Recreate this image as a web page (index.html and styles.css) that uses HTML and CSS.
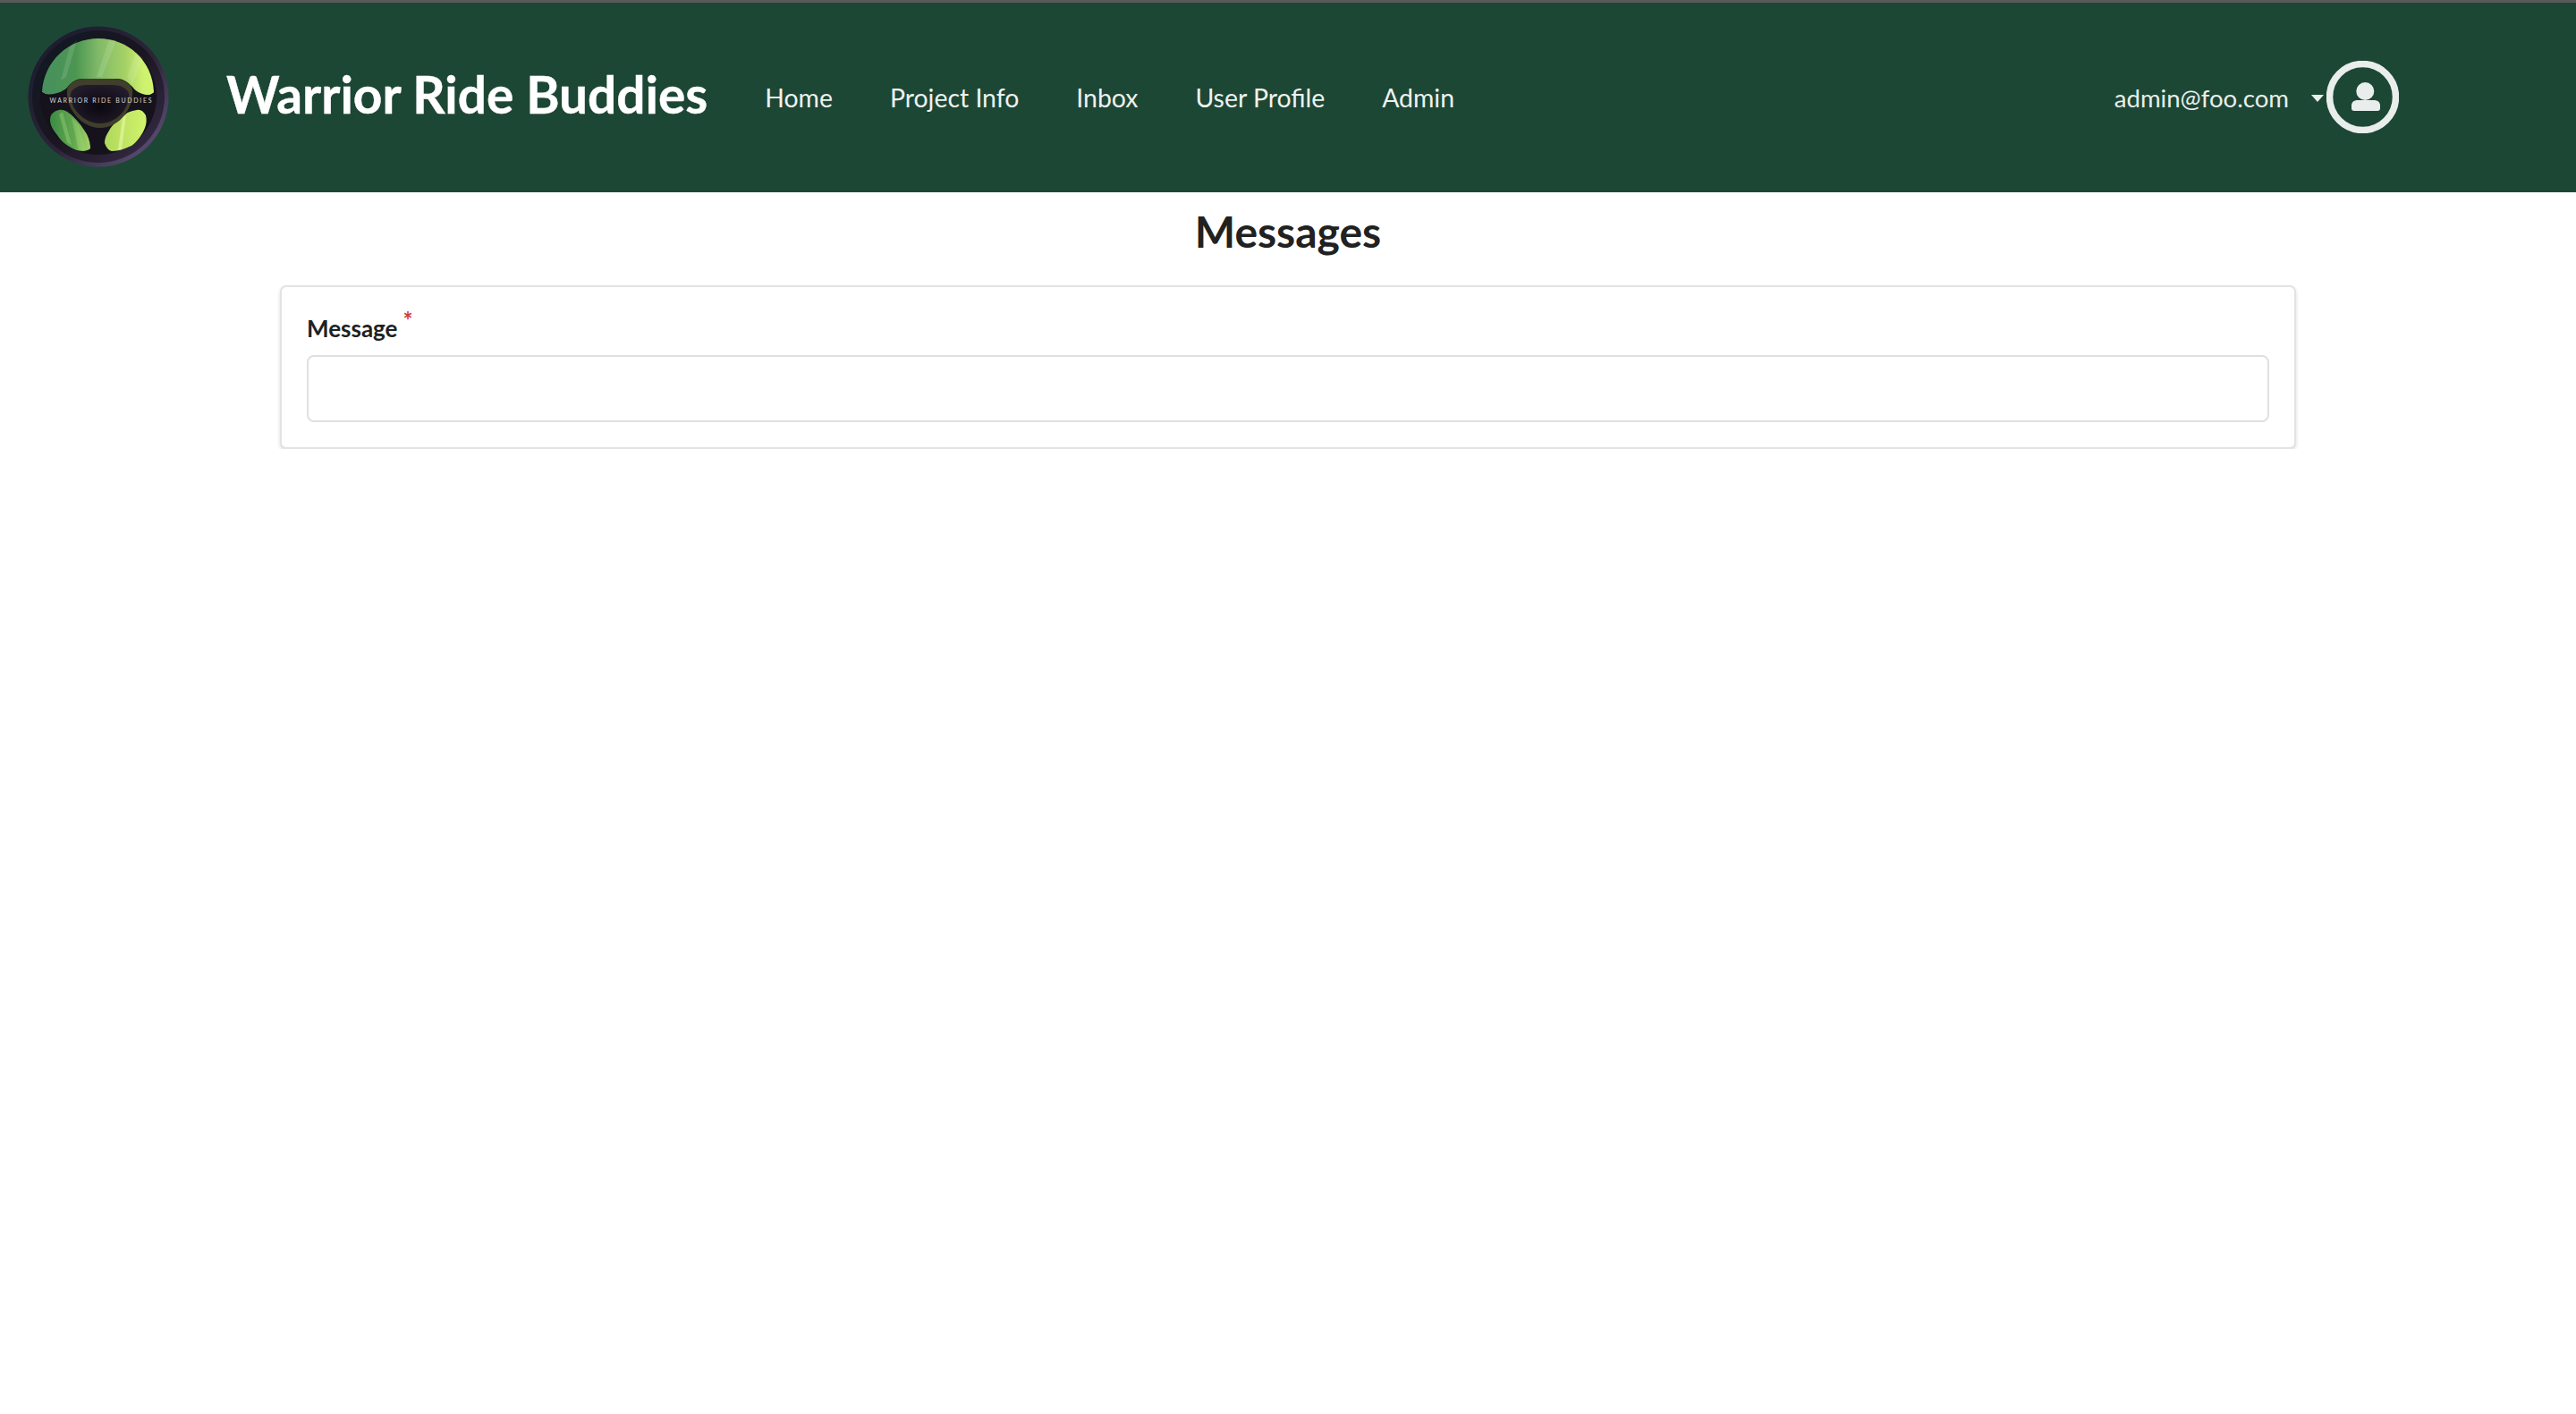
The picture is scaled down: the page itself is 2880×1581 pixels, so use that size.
FILE: index.html
```html
<!DOCTYPE html>
<html lang="en">
<head>
<meta charset="utf-8">
<title>Messages</title>
<link rel="stylesheet" href="styles.css">
</head>
<body>
<header class="topbar">
  <a class="logo" href="#">
    <svg viewBox="0 0 160 160" width="160" height="160">
      <defs>
        <linearGradient id="glass" x1="0" y1="0" x2="1" y2="0">
          <stop offset="0" stop-color="#47905f"/>
          <stop offset="0.3" stop-color="#4c9652"/>
          <stop offset="0.5" stop-color="#7fb968"/>
          <stop offset="0.75" stop-color="#a6d266"/>
          <stop offset="0.9" stop-color="#cdf06e"/>
          <stop offset="1" stop-color="#d2f570"/>
        </linearGradient>
        <linearGradient id="paneL" x1="0" y1="0" x2="1" y2="0">
          <stop offset="0" stop-color="#3c8b45"/>
          <stop offset="0.6" stop-color="#64a950"/>
          <stop offset="1" stop-color="#a7d668"/>
        </linearGradient>
        <linearGradient id="paneR" x1="0" y1="0" x2="1" y2="0">
          <stop offset="0" stop-color="#b0d85c"/>
          <stop offset="1" stop-color="#d2f36c"/>
        </linearGradient>
        <linearGradient id="rim" x1="0" y1="0" x2="1" y2="1">
          <stop offset="0" stop-color="#191a2e"/>
          <stop offset="0.55" stop-color="#2c2438"/>
          <stop offset="1" stop-color="#6a5a88"/>
        </linearGradient>
        <linearGradient id="ring" x1="0" y1="0" x2="1" y2="1">
          <stop offset="0" stop-color="#0f1a24"/>
          <stop offset="0.5" stop-color="#1a1520"/>
          <stop offset="1" stop-color="#3a2f4c"/>
        </linearGradient>
        <radialGradient id="hub" cx="0.5" cy="0.55" r="0.6">
          <stop offset="0" stop-color="#0a0810"/>
          <stop offset="1" stop-color="#241c2c"/>
        </radialGradient>
      </defs>
      <circle cx="80" cy="80" r="78.500" fill="url(#rim)"/>
      <circle cx="80" cy="80" r="74" fill="url(#ring)"/>
      <circle cx="80" cy="80" r="65" fill="#15121c"/>
      <path d="M17 75C19 40 47 15 80 15s61 25 62 60c-2 6-18 3-24-6-6-6-11-9-17-9H63c-7 0-13 3-18 10-7 7-24 10-28 5z" fill="url(#glass)"/>
      <path d="M48 24 56 17 44 58 38 62zM92 16 100 17 84 58 78 58zM122 30 130 38 118 66 112 58z" fill="#fff" opacity=".12"/>
      <path d="M27 101C30 96 36 94 40 95 48 96 60 110 67 122 70 128 71 134 71 138 66 142 60 141 56 140 46 136 38 130 34 123 28 116 24 108 27 101z" fill="url(#paneL)"/>
      <path d="M50 103 58 112 66 140 58 140zM36 100 40 97 50 134 45 131z" fill="#a8dc80" opacity=".35"/>
      <path d="M133 101C130 96 127 94 123 95 118 96 113 97 110 100 102 106 95 112 92 118 88 124 87 128 87 132 89 137 91 140 95 141 103 141 110 138 117 135 124 130 129 122 132 115 134 110 134 105 133 101z" fill="url(#paneR)"/>
      <path d="M107 103 111 101 106 139 102 140z" fill="#f2fbc0" opacity=".5"/>
      <path d="M45 72C47 65 55 60 65 60H98C108 60 116 65 118 72 120 92 104 115 82 115 60 115 43 92 45 72z" fill="#3f3f2c"/>
      <path d="M49 76C51 71 58 67 66 67H97C105 67 112 71 114 76 116 92 101 110 82 110 63 110 47 92 49 76z" fill="url(#hub)"/>
      <path d="M17 75 30 82 15 84zM143 75 130 82 145 84z" fill="#15121c"/>
      <text x="25.500" y="87" class="logo-text" textLength="114" lengthAdjust="spacing">WARRIOR RIDE BUDDIES</text>
    </svg>
  </a>
  <a class="brand" href="#">Warrior Ride Buddies</a>
  <nav class="nav">
    <a href="#">Home</a>
    <a href="#">Project Info</a>
    <a href="#">Inbox</a>
    <a href="#">User Profile</a>
    <a href="#">Admin</a>
  </nav>
  <div class="user">
    <span class="email">admin@foo.com</span>
    <span class="caret"></span>
    <svg class="avatar" viewBox="0 0 81 81" width="81" height="81">
      <circle cx="40.500" cy="40.500" r="37" fill="none" stroke="#e9eeec" stroke-width="7.500"/>
      <circle cx="43.300" cy="34" r="10" fill="#e9eeec"/>
      <path d="M28 53v-3c0-4 3-6 7-6h18c4 0 7 2 7 6v3c0 2-1 3-3 3H31c-2 0-3-1-3-3z" fill="#e9eeec"/>
    </svg>
  </div>
</header>
<main class="page">
  <h1 class="title">Messages</h1>
  <form class="card">
    <label class="label" for="message">Message<sup class="req">*</sup></label>
    <input class="input" id="message" type="text">
  </form>
</main>
</body>
</html>
```
FILE: styles.css
```css
* { box-sizing: border-box; }
html, body { margin: 0; background: #fff; }
body { font-family: Lato, "Liberation Sans", sans-serif; color: #212121; }
a { color: inherit; text-decoration: none; }

.topbar {
  height: 215px;
  display: flex;
  align-items: center;
  background: #1d4735;
  border-top: 3px solid #5a5a5a;
  padding-left: 30px;
  color: #fff;
}
.logo { display: block; width: 160px; height: 160px; flex: none; margin-top: -2px; }
.logo svg { display: block; }
.logo-text { font-family: Lato, sans-serif; font-size: 7px; font-weight: 400; fill: #d6d6d8; }
.brand { margin-left: 63px; font-size: 56.800px; font-weight: 700; margin-top: -9px; -webkit-text-stroke: .4px #fff; }
.nav { display: flex; gap: 64px; margin-left: 64px; font-size: 28.400px; color: #eef2f0; margin-top: -1px; }
.user { margin-left: auto; margin-right: 198px; display: flex; align-items: center; color: #e9eeec; font-size: 27.600px; margin-top: -1px; }
.email { margin-top: 2px; }
.caret { width: 0; height: 0; border: 7px solid transparent; border-top: 8px solid #e9eeec; border-bottom: 0; margin: 2px 3px 0 25px; }
.avatar { display: block; }

.page { display: flex; flex-direction: column; align-items: center; }
.title { margin: 14px 0 0; font-size: 48px; line-height: 60px; font-weight: 700; color: #212121; }
.card {
  margin-top: 30px;
  width: 2254px;
  height: 183px;
  padding: 29px 28px 0;
  background: #fff;
  border: 2px solid #e3e3e3;
  border-radius: 7px;
  box-shadow: 0 2px 4px rgba(0,0,0,.14);
  display: flex;
  flex-direction: column;
}
.label { font-size: 26px; line-height: 34px; font-weight: 700; color: #212121; height: 47px; }
.req { color: #d33a36; font-size: 26px; line-height: 0; margin-left: 6px; vertical-align: 9px; }
.input { width: 100%; height: 75px; border: 2px solid #e0e0e0; border-radius: 8px; background: #fff; outline: none; }
```
